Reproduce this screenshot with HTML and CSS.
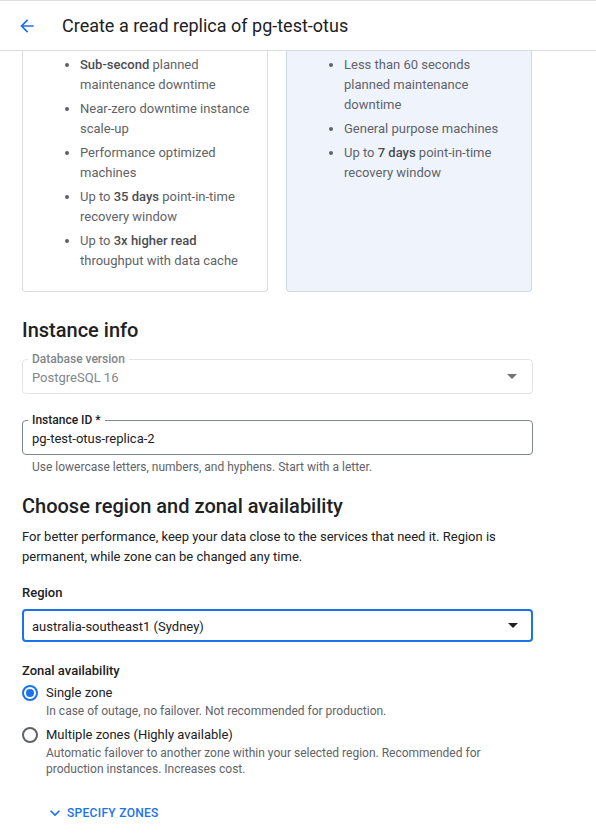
FILE: index.html
```html
<!DOCTYPE html>
<html lang="en">
<head>
<meta charset="utf-8">
<title>Create a read replica</title>
<link rel="stylesheet" href="styles.css">
</head>
<body>
<header class="topbar">
  <svg class="back" width="20" height="20" viewBox="0 0 24 24"><path d="M20 11H7.83l5.59-5.59L12 4l-8 8 8 8 1.41-1.41L7.83 13H20v-2z" fill="#1a73e8"/></svg>
  <h1 class="title">Create a read replica of pg-test-otus</h1>
</header>
<main class="main">
  <div class="cards">
    <div class="card">
      <ul class="feat">
        <li><b>Sub-second</b> planned maintenance downtime</li>
        <li>Near-zero downtime instance scale-up</li>
        <li>Performance optimized machines</li>
        <li>Up to <b>35 days</b> point-in-time recovery window</li>
        <li>Up to <b>3x higher read</b> throughput with data cache</li>
      </ul>
    </div>
    <div class="card card-selected">
      <ul class="feat">
        <li>Less than 60 seconds planned maintenance downtime</li>
        <li>General purpose machines</li>
        <li>Up to <b>7 days</b> point-in-time recovery window</li>
      </ul>
    </div>
  </div>

  <h2 class="h2 h2-first">Instance info</h2>

  <div class="field field-disabled">
    <span class="flabel">Database version</span>
    <span class="fvalue">PostgreSQL 16</span>
    <span class="caret caret-gray"></span>
  </div>

  <div class="field field-id">
    <span class="flabel flabel-dark">Instance ID *</span>
    <span class="fvalue fvalue-dark">pg-test-otus-replica-2</span>
  </div>
  <p class="hint">Use lowercase letters, numbers, and hyphens. Start with a letter.</p>

  <h2 class="h2 h2-second">Choose region and zonal availability</h2>
  <p class="desc">For better performance, keep your data close to the services that need it. Region is permanent, while zone can be changed any time.</p>

  <div class="label-strong region-label">Region</div>
  <div class="select-focus">
    <span class="fvalue fvalue-dark">australia-southeast1 (Sydney)</span>
    <span class="caret"></span>
  </div>

  <div class="label-strong zonal-label">Zonal availability</div>
  <div class="radio-row">
    <span class="radio radio-on"></span>
    <div class="radio-text">
      <div class="radio-title">Single zone</div>
      <div class="radio-desc">In case of outage, no failover. Not recommended for production.</div>
    </div>
  </div>
  <div class="radio-row">
    <span class="radio"></span>
    <div class="radio-text">
      <div class="radio-title">Multiple zones (Highly available)</div>
      <div class="radio-desc">Automatic failover to another zone within your selected region. Recommended for production instances. Increases cost.</div>
    </div>
  </div>

  <div class="specify">
    <svg width="20" height="20" viewBox="0 0 24 24"><path d="M7.41 8.59 12 13.17l4.59-4.58L18 10l-6 6-6-6z" fill="#1a73e8"/></svg>
    <span>SPECIFY ZONES</span>
  </div>
</main>
</body>
</html>
```

FILE: styles.css
```css
* { box-sizing: border-box; }
html, body { margin: 0; padding: 0; background: #fff; }
body {
  font-family: Roboto, "Liberation Sans", Arial, sans-serif;
  color: #202124;
  font-size: 13px;
  width: 596px;
  height: 840px;
  overflow: hidden;
}
.topbar {
  height: 51px;
  border-top: 1px solid #e0e0e0;
  border-bottom: 1px solid #dadce0;
  display: flex;
  align-items: center;
  padding-left: 16px;
}
.back { display: block; margin-left: 1px; }
.title {
  margin: 0 0 0 25px;
  font-size: 18px;
  font-weight: 400;
  color: #202124;
  line-height: 24px;
}
.main {
  width: 511px;
  margin-left: 22px;
}
.cards {
  display: grid;
  grid-template-columns: 246px 246px;
  column-gap: 18px;
}
.card {
  border: 1px solid #dadce0;
  border-top: none;
  border-radius: 0 0 4px 4px;
  padding: 4px 16px 16px 0;
  height: 241px;
}
.card-selected {
  background: #eff4fc;
  border-color: #d3d8e0;
}
.feat {
  margin: 0;
  padding-left: 57px;
  color: #5f6368;
  font-size: 13px;
  line-height: 20px;
}
.feat li { margin-bottom: 4px; }
.feat li::marker { color: #5f6368; }
.feat b { font-weight: 500; color: #4a4d51; }
.h2 {
  margin: 0;
  font-size: 20px;
  font-weight: 500;
  line-height: 28px;
  color: #202124;
}
.h2-first { margin-top: 24px; }
.field {
  position: relative;
  height: 35px;
  border: 1px solid #e3e3e3;
  border-radius: 4px;
  display: flex;
  align-items: center;
  padding: 0 9px;
  margin-top: 15px;
}
.field-id {
  border-color: #80868b;
  margin-top: 26px;
}
.flabel {
  position: absolute;
  top: -8px;
  left: 5px;
  padding: 0 4px;
  background: #fff;
  font-size: 12px;
  line-height: 14px;
  color: #80868b;
  font-weight: 500;
}
.flabel-dark { color: #202124; }
.fvalue {
  font-size: 13px;
  color: #80868b;
  flex: 1;
  padding-top: 1px;
}
.fvalue-dark { color: #202124; }
.caret {
  width: 0;
  height: 0;
  border-left: 5px solid transparent;
  border-right: 5px solid transparent;
  border-top: 5px solid #202124;
  margin-right: 6px;
}
.caret-gray { border-top-color: #6f7276; }
.hint {
  margin: 5px 0 0 10px;
  font-size: 12px;
  line-height: 14px;
  color: #5f6368;
}
.h2-second { margin-top: 18px; }
.desc {
  margin: 7px 0 0;
  font-size: 13px;
  line-height: 20px;
  color: #202124;
}
.label-strong {
  font-size: 13px;
  font-weight: 500;
  line-height: 20px;
}
.region-label { margin-top: 16px; }
.select-focus {
  margin-top: 6px;
  height: 33px;
  border: 2px solid #1a73e8;
  border-radius: 4px;
  display: flex;
  align-items: center;
  padding: 0 8px;
}
.select-focus .caret { margin-right: 5px; }
.zonal-label { margin-top: 19px; }
.radio-row {
  display: flex;
  align-items: flex-start;
  margin-top: 2px;
}
.radio-row + .radio-row { margin-top: 6px; }
.radio {
  width: 16px;
  height: 16px;
  border: 2px solid #5f6368;
  border-radius: 50%;
  margin: 2px 8px 0 0;
  flex: none;
  position: relative;
}
.radio-on { border-color: #1a73e8; }
.radio-on::after {
  content: "";
  position: absolute;
  left: 2px;
  top: 2px;
  width: 8px;
  height: 8px;
  border-radius: 50%;
  background: #1a73e8;
}
.radio-title {
  font-size: 13px;
  line-height: 20px;
  color: #202124;
}
.radio-desc {
  font-size: 12px;
  line-height: 16px;
  color: #5f6368;
  padding-right: 30px;
}
.specify {
  display: flex;
  align-items: center;
  gap: 2px;
  margin: 26px 0 0 23px;
  color: #1a73e8;
  font-size: 12px;
  font-weight: 500;
  letter-spacing: 0.3px;
}
.specify svg { display: block; }
```
